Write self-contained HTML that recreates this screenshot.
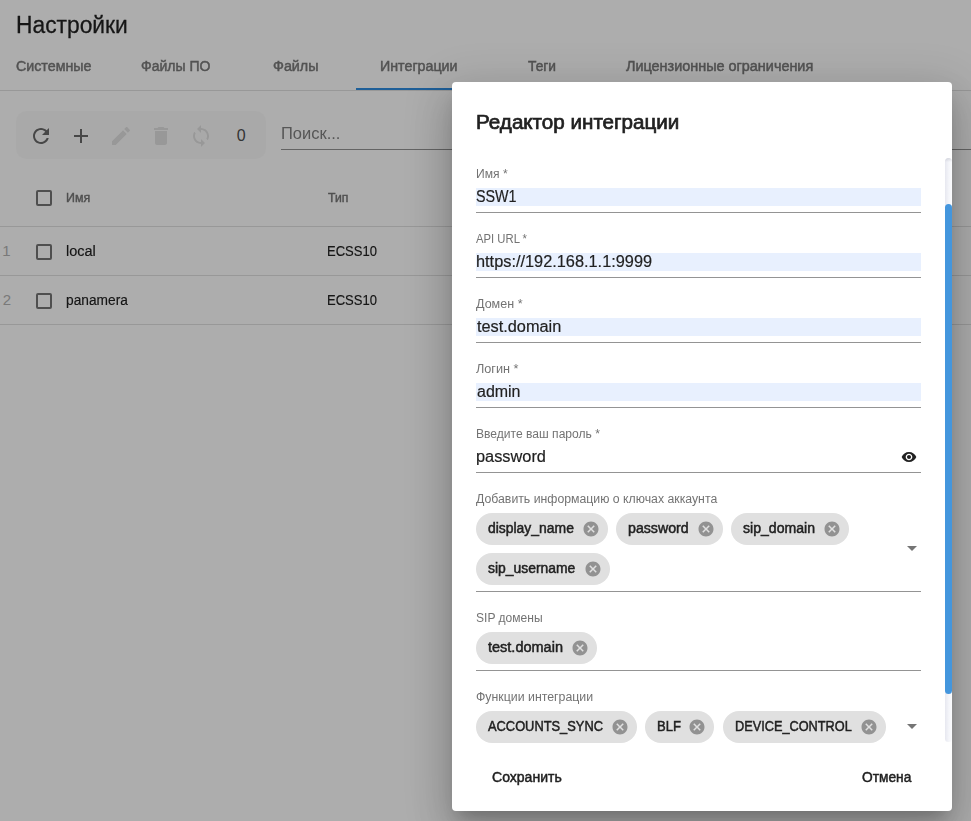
<!DOCTYPE html>
<html lang="ru">
<head>
<meta charset="utf-8">
<title>Настройки</title>
<style>
html,body{margin:0;padding:0}
body{width:971px;height:821px;overflow:hidden;background:#fff;position:relative;font-family:"Liberation Sans",sans-serif}
.x{position:absolute;white-space:nowrap;display:block;transform-origin:0 0}
.m{-webkit-text-stroke:.034em currentColor}
.s{-webkit-text-stroke:.011em currentColor}
.g{filter:grayscale(1)}
.ic{position:absolute;display:block}
.page{position:absolute;left:0;top:0;width:971px;height:821px;overflow:hidden}
.divider{position:absolute;left:0;top:90px;width:971px;height:1px;background:rgba(0,0,0,.12)}
.ink{position:absolute;left:356px;top:88px;width:125px;height:2px;background:#2e8ce1}
.tools{position:absolute;left:16px;top:111px;width:250px;height:48px;border-radius:10px;background:rgba(0,0,0,.02)}
.sline{position:absolute;left:281px;top:149px;width:690px;height:1px;background:rgba(0,0,0,.42)}
.rl{position:absolute;left:0;width:971px;height:1px;background:rgba(0,0,0,.12)}
.cb{position:absolute;left:36px;width:12px;height:12px;border:2px solid rgba(0,0,0,.54);border-radius:2px}
.overlay{position:absolute;left:0;top:0;width:971px;height:821px;background:rgba(0,0,0,.32)}
.dialog{position:absolute;left:452px;top:82px;width:500px;height:729px;background:#fff;border-radius:4px;
 box-shadow:0 11px 15px -7px rgba(0,0,0,.2),0 24px 38px 3px rgba(0,0,0,.14),0 9px 46px 8px rgba(0,0,0,.12)}
.scroll{position:absolute;left:0;top:76px;width:500px;height:585px;overflow:hidden}
.inner{position:absolute;left:0;top:-76px;width:500px;height:729px}
.hl{position:absolute;left:24px;width:445px;height:18px;background:#e8f0fe}
.ul{position:absolute;left:24px;width:445px;height:1px;background:rgba(0,0,0,.42)}
.chip{position:absolute;height:32px;border-radius:16px;background:#e0e0e0}
.arrow{position:absolute;left:455px;width:0;height:0;border-left:5px solid transparent;border-right:5px solid transparent;border-top:5px solid rgba(0,0,0,.54)}
.track{position:absolute;left:493px;top:0;width:7px;height:584px;border-radius:4px;background:linear-gradient(180deg,rgba(110,115,135,.22),rgba(110,115,135,0) 4px),linear-gradient(90deg,#e7e8f0,#f5f6fa 60%,#fcfcfe)}
.thumb{position:absolute;left:493px;top:46px;width:7px;height:490px;border-radius:4px;background:#4496dd}
</style>
</head>
<body>
<div class="page">
<span class="x s" style="left:16.00px;top:9.03px;font-size:23px;line-height:32px;transform:scaleX(0.9914);color:#212121">Настройки</span>
<span class="x m g" style="left:16.00px;top:55.65px;font-size:14px;line-height:20px;transform:scaleX(1.0175);color:#7a7a7a">Системные</span><span class="x m g" style="left:141.00px;top:55.65px;font-size:14px;line-height:20px;transform:scaleX(1.0003);color:#7a7a7a">Файлы ПО</span><span class="x m g" style="left:273.00px;top:55.65px;font-size:14px;line-height:20px;transform:scaleX(1.0233);color:#7a7a7a">Файлы</span><span class="x m g" style="left:380.00px;top:55.65px;font-size:14px;line-height:20px;transform:scaleX(1.0170);color:#7a7a7a">Интеграции</span><span class="x m g" style="left:528.00px;top:55.65px;font-size:14px;line-height:20px;transform:scaleX(0.9824);color:#7a7a7a">Теги</span><span class="x m g" style="left:626.00px;top:55.65px;font-size:14px;line-height:20px;transform:scaleX(1.0296);color:#7a7a7a">Лицензионные ограничения</span>
<div class="divider"></div><div class="ink"></div>
<div class="tools"></div>
<svg class="ic" style="left:29px;top:124px" width="24" height="24" viewBox="0 0 24 24"><path fill="rgba(0,0,0,.58)" d="M17.65 6.35C16.2 4.9 14.21 4 12 4c-4.42 0-7.99 3.58-7.99 8s3.57 8 7.99 8c3.73 0 6.84-2.55 7.73-6h-2.08c-.82 2.33-3.04 4-5.65 4-3.31 0-6-2.69-6-6s2.69-6 6-6c1.66 0 3.14.69 4.22 1.78L13 11h7V4l-2.35 2.35z"/></svg><svg class="ic" style="left:69px;top:124px" width="24" height="24" viewBox="0 0 24 24"><path fill="rgba(0,0,0,.58)" d="M19 13h-6v6h-2v-6H5v-2h6V5h2v6h6v2z"/></svg><svg class="ic" style="left:109px;top:124px" width="24" height="24" viewBox="0 0 24 24"><path fill="rgba(0,0,0,.1)" d="M3 17.25V21h3.75L17.81 9.94l-3.75-3.75L3 17.25zM20.71 7.04c.39-.39.39-1.02 0-1.41l-2.34-2.34c-.39-.39-1.02-.39-1.41 0l-1.83 1.83 3.75 3.75 1.83-1.83z"/></svg><svg class="ic" style="left:149px;top:124px" width="24" height="24" viewBox="0 0 24 24"><path fill="rgba(0,0,0,.1)" d="M6 19c0 1.1.9 2 2 2h8c1.1 0 2-.9 2-2V7H6v12zM19 4h-3.5l-1-1h-5l-1 1H5v2h14V4z"/></svg><svg class="ic" style="left:189px;top:124px" width="24" height="24" viewBox="0 0 24 24"><path fill="rgba(0,0,0,.1)" d="M12 4V1L8 5l4 4V6c3.31 0 6 2.69 6 6 0 1.01-.25 1.97-.7 2.8l1.46 1.46C19.54 15.03 20 13.57 20 12c0-4.42-3.58-8-8-8zm0 14c-3.31 0-6-2.69-6-6 0-1.01.25-1.97.7-2.8L5.24 7.74C4.46 8.97 4 10.43 4 12c0 4.42 3.58 8 8 8v3l4-4-4-4v3z"/></svg>
<span class="x" style="left:236.69px;top:126.16px;font-size:16px;line-height:20px;color:#4d4d4d">0</span>
<span class="x" style="left:281.00px;top:123.96px;font-size:16px;line-height:20px;transform:scaleX(1.0305);color:#808080">Поиск...</span>
<div class="sline"></div>
<div class="cb" style="top:190px"></div><span class="x m g" style="left:66.00px;top:187.94px;font-size:12px;line-height:20px;transform:scaleX(1.0351);color:#757575">Имя</span><span class="x m g" style="left:328.00px;top:187.94px;font-size:12px;line-height:20px;transform:scaleX(1.0168);color:#757575">Тип</span>
<div class="rl" style="top:226px"></div>
<span class="x" style="left:2.16px;top:240.80px;font-size:15px;line-height:20px;color:#b3b3b3">1</span><div class="cb" style="top:244px"></div><span class="x s" style="left:66.00px;top:240.85px;font-size:14px;line-height:20px;transform:scaleX(1.0357);color:#212121">local</span><span class="x s" style="left:327.00px;top:240.85px;font-size:14px;line-height:20px;transform:scaleX(0.9300);color:#212121">ECSS10</span>
<div class="rl" style="top:275px"></div>
<span class="x" style="left:2.75px;top:289.80px;font-size:15px;line-height:20px;color:#b3b3b3">2</span><div class="cb" style="top:293px"></div><span class="x s" style="left:66.00px;top:289.85px;font-size:14px;line-height:20px;transform:scaleX(0.9809);color:#212121">panamera</span><span class="x s" style="left:327.00px;top:289.85px;font-size:14px;line-height:20px;transform:scaleX(0.9300);color:#212121">ECSS10</span>
<div class="rl" style="top:324px"></div>
</div>
<div class="overlay"></div>
<div class="dialog">
<span class="x m g" style="left:24.00px;top:24.27px;font-size:20px;line-height:32px;transform:scaleX(1.0309);color:#212121">Редактор интеграции</span>
<div class="scroll"><div class="inner">
<div class="hl" style="top:106px"></div><div class="hl" style="top:171px"></div><div class="hl" style="top:236px"></div><div class="hl" style="top:301px"></div>
<div class="ul" style="top:130px"></div><div class="ul" style="top:195px"></div><div class="ul" style="top:260px"></div><div class="ul" style="top:325px"></div><div class="ul" style="top:390px"></div><div class="ul" style="top:509px"></div><div class="ul" style="top:588px"></div>
<span class="x g" style="left:24.00px;top:82.19px;font-size:12px;line-height:20px;transform:scaleX(1.0067);color:#737373">Имя *</span><span class="x g s" style="left:24.00px;top:104.76px;font-size:16px;line-height:20px;transform:scaleX(0.8951);color:#212121">SSW1</span>
<span class="x g" style="left:24.00px;top:147.19px;font-size:12px;line-height:20px;transform:scaleX(0.9405);color:#737373">API URL *</span><span class="x g s" style="left:24.00px;top:169.76px;font-size:16px;line-height:20px;transform:scaleX(1.0202);color:#212121">https://192.168.1.1:9999</span>
<span class="x g" style="left:24.00px;top:212.19px;font-size:12px;line-height:20px;transform:scaleX(1.0461);color:#737373">Домен *</span><span class="x g s" style="left:25.00px;top:234.76px;font-size:16px;line-height:20px;transform:scaleX(1.0188);color:#212121">test.domain</span>
<span class="x g" style="left:24.00px;top:277.19px;font-size:12px;line-height:20px;transform:scaleX(1.0564);color:#737373">Логин *</span><span class="x g s" style="left:25.00px;top:299.76px;font-size:16px;line-height:20px;transform:scaleX(0.9984);color:#212121">admin</span>
<span class="x g" style="left:24.00px;top:342.19px;font-size:12px;line-height:20px;transform:scaleX(1.0067);color:#737373">Введите ваш пароль *</span><span class="x g s" style="left:24.00px;top:364.76px;font-size:16px;line-height:20px;transform:scaleX(1.0211);color:#212121">password</span>
<svg class="ic" style="left:449px;top:367px" width="16" height="16" viewBox="0 0 24 24"><path fill="rgba(0,0,0,.87)" d="M12 4.5C7 4.5 2.73 7.61 1 12c1.73 4.39 6 7.5 11 7.5s9.27-3.11 11-7.5c-1.73-4.39-6-7.5-11-7.5zM12 17c-2.76 0-5-2.24-5-5s2.24-5 5-5 5 2.24 5 5-2.24 5-5 5zm0-8c-1.66 0-3 1.34-3 3s1.34 3 3 3 3-1.34 3-3-1.34-3-3-3z"/></svg>
<span class="x g" style="left:24.00px;top:407.19px;font-size:12px;line-height:20px;transform:scaleX(1.0230);color:#737373">Добавить информацию о ключах аккаунта</span><span class="x g" style="left:24.00px;top:526.19px;font-size:12px;line-height:20px;transform:scaleX(1.0053);color:#737373">SIP домены</span><span class="x g" style="left:24.00px;top:605.19px;font-size:12px;line-height:20px;transform:scaleX(1.0273);color:#737373">Функции интеграции</span>
<div class="chip" style="left:24.0px;top:431px;width:131.8px"></div><svg class="ic" style="left:129.8px;top:438px" width="18" height="18" viewBox="0 0 24 24"><path fill="rgba(0,0,0,.35)" d="M12 2C6.47 2 2 6.47 2 12s4.47 10 10 10 10-4.47 10-10S17.53 2 12 2zm5 13.59L15.59 17 12 13.41 8.41 17 7 15.59 10.59 12 7 8.41 8.41 7 12 10.59 15.59 7 17 8.41 13.41 12 17 15.59z"/></svg><span class="x m" style="left:36.00px;top:436.35px;font-size:14px;line-height:20px;transform:scaleX(0.9941);color:#212121">display_name</span><div class="chip" style="left:164.0px;top:431px;width:107.2px"></div><svg class="ic" style="left:245.2px;top:438px" width="18" height="18" viewBox="0 0 24 24"><path fill="rgba(0,0,0,.35)" d="M12 2C6.47 2 2 6.47 2 12s4.47 10 10 10 10-4.47 10-10S17.53 2 12 2zm5 13.59L15.59 17 12 13.41 8.41 17 7 15.59 10.59 12 7 8.41 8.41 7 12 10.59 15.59 7 17 8.41 13.41 12 17 15.59z"/></svg><span class="x m" style="left:176.00px;top:436.35px;font-size:14px;line-height:20px;transform:scaleX(1.0127);color:#212121">password</span><div class="chip" style="left:278.6px;top:431px;width:118.7px"></div><svg class="ic" style="left:371.3px;top:438px" width="18" height="18" viewBox="0 0 24 24"><path fill="rgba(0,0,0,.35)" d="M12 2C6.47 2 2 6.47 2 12s4.47 10 10 10 10-4.47 10-10S17.53 2 12 2zm5 13.59L15.59 17 12 13.41 8.41 17 7 15.59 10.59 12 7 8.41 8.41 7 12 10.59 15.59 7 17 8.41 13.41 12 17 15.59z"/></svg><span class="x m" style="left:291.00px;top:436.35px;font-size:14px;line-height:20px;transform:scaleX(1.0057);color:#212121">sip_domain</span><div class="chip" style="left:24.0px;top:471px;width:134.0px"></div><svg class="ic" style="left:132px;top:478px" width="18" height="18" viewBox="0 0 24 24"><path fill="rgba(0,0,0,.35)" d="M12 2C6.47 2 2 6.47 2 12s4.47 10 10 10 10-4.47 10-10S17.53 2 12 2zm5 13.59L15.59 17 12 13.41 8.41 17 7 15.59 10.59 12 7 8.41 8.41 7 12 10.59 15.59 7 17 8.41 13.41 12 17 15.59z"/></svg><span class="x m" style="left:36.00px;top:476.35px;font-size:14px;line-height:20px;transform:scaleX(0.9925);color:#212121">sip_username</span><div class="chip" style="left:24.0px;top:550px;width:120.7px"></div><svg class="ic" style="left:118.7px;top:557px" width="18" height="18" viewBox="0 0 24 24"><path fill="rgba(0,0,0,.35)" d="M12 2C6.47 2 2 6.47 2 12s4.47 10 10 10 10-4.47 10-10S17.53 2 12 2zm5 13.59L15.59 17 12 13.41 8.41 17 7 15.59 10.59 12 7 8.41 8.41 7 12 10.59 15.59 7 17 8.41 13.41 12 17 15.59z"/></svg><span class="x m" style="left:36.00px;top:555.35px;font-size:14px;line-height:20px;transform:scaleX(1.0358);color:#212121">test.domain</span><div class="chip" style="left:24.0px;top:629px;width:160.7px"></div><svg class="ic" style="left:158.7px;top:636px" width="18" height="18" viewBox="0 0 24 24"><path fill="rgba(0,0,0,.35)" d="M12 2C6.47 2 2 6.47 2 12s4.47 10 10 10 10-4.47 10-10S17.53 2 12 2zm5 13.59L15.59 17 12 13.41 8.41 17 7 15.59 10.59 12 7 8.41 8.41 7 12 10.59 15.59 7 17 8.41 13.41 12 17 15.59z"/></svg><span class="x m" style="left:36.00px;top:634.35px;font-size:14px;line-height:20px;transform:scaleX(0.9177);color:#212121">ACCOUNTS_SYNC</span><div class="chip" style="left:193.0px;top:629px;width:69.3px"></div><svg class="ic" style="left:236.3px;top:636px" width="18" height="18" viewBox="0 0 24 24"><path fill="rgba(0,0,0,.35)" d="M12 2C6.47 2 2 6.47 2 12s4.47 10 10 10 10-4.47 10-10S17.53 2 12 2zm5 13.59L15.59 17 12 13.41 8.41 17 7 15.59 10.59 12 7 8.41 8.41 7 12 10.59 15.59 7 17 8.41 13.41 12 17 15.59z"/></svg><span class="x m" style="left:205.00px;top:634.35px;font-size:14px;line-height:20px;transform:scaleX(0.9323);color:#212121">BLF</span><div class="chip" style="left:270.8px;top:629px;width:163.2px"></div><svg class="ic" style="left:408px;top:636px" width="18" height="18" viewBox="0 0 24 24"><path fill="rgba(0,0,0,.35)" d="M12 2C6.47 2 2 6.47 2 12s4.47 10 10 10 10-4.47 10-10S17.53 2 12 2zm5 13.59L15.59 17 12 13.41 8.41 17 7 15.59 10.59 12 7 8.41 8.41 7 12 10.59 15.59 7 17 8.41 13.41 12 17 15.59z"/></svg><span class="x m" style="left:283.00px;top:634.35px;font-size:14px;line-height:20px;transform:scaleX(0.9095);color:#212121">DEVICE_CONTROL</span>
<div class="arrow" style="top:464px"></div>
<div class="arrow" style="top:642px"></div>
</div>
<div class="track"></div><div class="thumb"></div>
</div>
<span class="x m" style="left:40.00px;top:684.95px;font-size:14px;line-height:20px;transform:scaleX(1.0018);color:#212121">Сохранить</span><span class="x m" style="left:410.00px;top:684.95px;font-size:14px;line-height:20px;transform:scaleX(0.9827);color:#212121">Отмена</span>
</div>
</body>
</html>
